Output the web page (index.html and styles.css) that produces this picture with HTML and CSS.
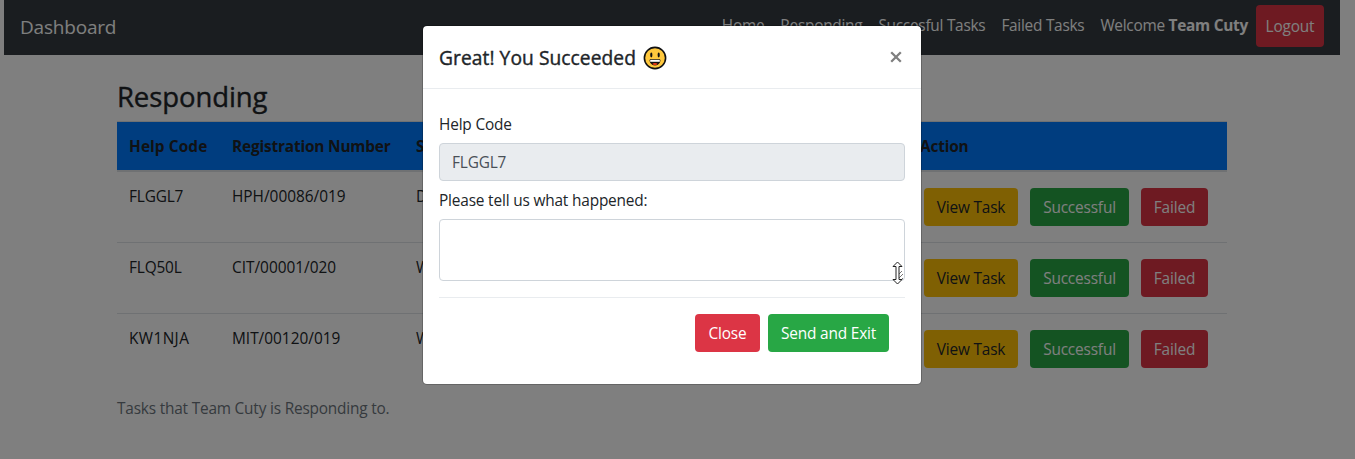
FILE: index.html
```html
<!DOCTYPE html>
<html lang="en">
<head>
<meta charset="utf-8">
<title>Dashboard</title>
<link rel="stylesheet" href="styles.css">
</head>
<body>
<nav class="navbar">
  <a class="brand">Dashboard</a>
  <div class="links">
    <a class="link home">Home</a>
    <a class="link responding">Responding</a>
    <a class="link successful">Succesful Tasks</a>
    <a class="link failed">Failed Tasks</a>
    <span class="link welcome">Welcome <b>Team Cuty</b></span>
  </div>
  <a class="logout">Logout</a>
</nav>
<main class="container">
  <h2 class="title">Responding</h2>
  <table class="tasks">
    <colgroup><col class="c-code"><col class="c-reg"><col class="c-state"><col class="c-action"></colgroup>
    <thead>
      <tr><th class="th-code">Help Code</th><th>Registration Number</th><th>S</th><th>Action</th></tr>
    </thead>
    <tbody>
      <tr><td>FLGGL7</td><td class="reg">HPH/00086/019</td><td>D</td>
        <td class="cell-actions"><div class="actions"><button class="btn warning">View Task</button><button class="btn success">Successful</button><button class="btn danger">Failed</button></div></td></tr>
      <tr><td>FLQ50L</td><td class="reg">CIT/00001/020</td><td>W</td>
        <td class="cell-actions"><div class="actions"><button class="btn warning">View Task</button><button class="btn success">Successful</button><button class="btn danger">Failed</button></div></td></tr>
      <tr><td class="wide">KW1NJA</td><td class="reg">MIT/00120/019</td><td>W</td>
        <td class="cell-actions"><div class="actions"><button class="btn warning">View Task</button><button class="btn success">Successful</button><button class="btn danger">Failed</button></div></td></tr>
    </tbody>
  </table>
  <p class="caption">Tasks that Team Cuty is Responding to.</p>
</main>
<div class="backdrop">
  <section class="modal">
    <header class="modal-header">
      <h5 class="modal-title">Great! You Succeeded</h5>
      <svg class="smile" viewBox="0 0 24 24" width="24" height="24">
        <circle cx="12" cy="12" r="10.6" fill="#ffc83d" stroke="#111" stroke-width="1.6"/>
        <ellipse cx="8.300" cy="9" rx="1.100" ry="2.400" fill="#111"/>
        <ellipse cx="15.700" cy="9" rx="1.100" ry="2.400" fill="#111"/>
        <path d="M7 13.800h10c0 3.600-2.200 5.200-5 5.200s-5-1.600-5-5.200z" fill="#111" stroke="#111"/>
        <path d="M7.200 13.900h9.600v1.900H7.200z" fill="#fff"/>
        <path d="M9.200 18c1.400-1.500 4.200-1.500 5.600 0-1.400 1.200-4.200 1.200-5.600 0z" fill="#f03a17"/>
      </svg>
      <button class="close" aria-label="Close"><svg viewBox="0 0 12 12" width="12" height="12"><path d="M1.200 1.200l9.600 9.600M10.800 1.200L1.200 10.800" stroke="#7f7f7f" stroke-width="2.300"/></svg></button>
    </header>
    <form class="modal-body">
      <label class="label help">Help Code</label>
      <input class="field" value="FLGGL7" disabled>
      <label class="label tell">Please tell us what happened:</label>
      <div class="area-wrap">
        <textarea class="field area"></textarea>
        <svg class="cursor" viewBox="0 0 13 24" width="13" height="24">
          <path d="M8 17l4-4M9 20l3-3M8 13l3-3" stroke="#777" fill="none"/>
          <path d="M6.500 1L11 5.500H8v13h3L6.500 23 2 18.500h3v-13H2z" fill="#fff" stroke="#222" stroke-linejoin="round"/>
        </svg>
      </div>
      <footer class="modal-footer">
        <button type="button" class="btn danger close-btn">Close</button>
        <button type="button" class="btn success send">Send and Exit</button>
      </footer>
    </form>
  </section>
</div>
</body>
</html>
```
FILE: styles.css
```css
* { box-sizing: border-box; }
body {
  margin: 0;
  height: 459px;
  overflow: hidden;
  background: #fff;
  color: #212529;
  font: 400 15.4px/24px "Open Sans", "Noto Sans", sans-serif;
  letter-spacing: -0.17px;
}
.navbar {
  display: flex;
  align-items: center;
  height: 55px;
  margin: 0 15px 0 4px;
  padding: 0 16px;
  background: #343a40;
  color: #fff;
  white-space: nowrap;
}
.brand { font-size: 19px; margin-right: auto; padding-bottom: 2px; letter-spacing: -0.2px; }
.links { display: flex; margin-right: 8px; padding-bottom: 3px; letter-spacing: -0.26px; }
.link { margin-left: 16px; }
.logout {
  width: 68px;
  height: 42px;
  margin-bottom: 3px;
  padding-top: 10px;
  border-radius: 4px;
  background: #dc3545;
  text-align: center;
}
.container { width: 1110px; margin: 23px 0 0 117px; }
.title {
  margin: 0 0 5px;
  font-size: 27.500px;
  line-height: 38px;
  font-weight: 400;
  letter-spacing: -0.1px;
  -webkit-text-stroke: 0.4px #212529;
}
.tasks { width: 100%; table-layout: fixed; border-collapse: separate; border-spacing: 0; }
.c-code { width: 103px; }
.c-reg { width: 184px; }
.c-state { width: 504px; }
.tasks th {
  height: 51px;
  padding: 13px 12px 11px;
  border-top: 1px solid #dee2e6;
  border-bottom: 2px solid #dee2e6;
  background: #007bff;
  background-clip: padding-box;
  text-align: left;
  white-space: nowrap;
}
.tasks .th-code { letter-spacing: 0.1px; }
.tasks td { height: 71px; padding: 13px 12px 11px; border-top: 1px solid #dee2e6; vertical-align: top; }
.tasks tbody tr:first-child td { height: 70px; border-top: 0; }
.tasks .reg { letter-spacing: 0; }
.tasks .wide { letter-spacing: 0.4px; }
.actions { display: flex; gap: 12px; padding: 3px 0 0 4px; }
.btn {
  height: 38px;
  padding: 1px 0 0;
  border: 0;
  border-radius: 4px;
  color: #fff;
  font: inherit;
  letter-spacing: inherit;
  white-space: nowrap;
}
.warning { width: 94px; background: #ffc107; color: #212529; }
.success { width: 99px; background: #28a745; }
.danger { width: 67px; background: #dc3545; }
.caption { margin: 13px 0 0; color: #6c757d; letter-spacing: -0.19px; }
.backdrop {
  position: absolute;
  inset: 0;
  padding-top: 25px;
  background: rgba(0, 0, 0, .5);
}
.modal {
  width: 500px;
  height: 360px;
  margin-left: 422px;
  border: 1px solid rgba(0, 0, 0, .2);
  border-radius: 5px;
  background: #fff;
  background-clip: padding-box;
}
.modal-header {
  display: flex;
  align-items: center;
  height: 63px;
  padding: 0 16px;
  border-bottom: 1px solid #e9ecef;
}
.modal-title {
  margin: 0;
  padding-top: 1px;
  font-size: 19.200px;
  font-weight: 400;
  letter-spacing: 0.070px;
  -webkit-text-stroke: 0.4px #212529;
}
.smile { margin: 1px auto 0 7px; }
.close {
  display: flex;
  margin-right: 3px;
  padding: 0;
  border: 0;
  background: none;
}
.modal-body { display: flex; flex-direction: column; padding: 24px 16px 0; }
.label { height: 24px; margin-bottom: 6px; }
.field {
  display: block;
  width: 100%;
  height: 38px;
  padding: 1px 12px 0;
  border: 1px solid #ced4da;
  border-radius: 4px;
  font: inherit;
  letter-spacing: inherit;
}
.field:disabled { background: #e9ecef; color: #495057; }
.tell { margin-top: 8px; }
.area-wrap { position: relative; height: 62px; margin-bottom: 16px; }
.area { height: 62px; resize: none; }
.cursor { position: absolute; right: 1px; bottom: -4px; }
.modal-footer {
  display: flex;
  justify-content: flex-end;
  gap: 8px;
  padding: 16px 16px 0 0;
  border-top: 1px solid #e9ecef;
}
.close-btn { width: 65px; }
.send { width: 121px; }
```
